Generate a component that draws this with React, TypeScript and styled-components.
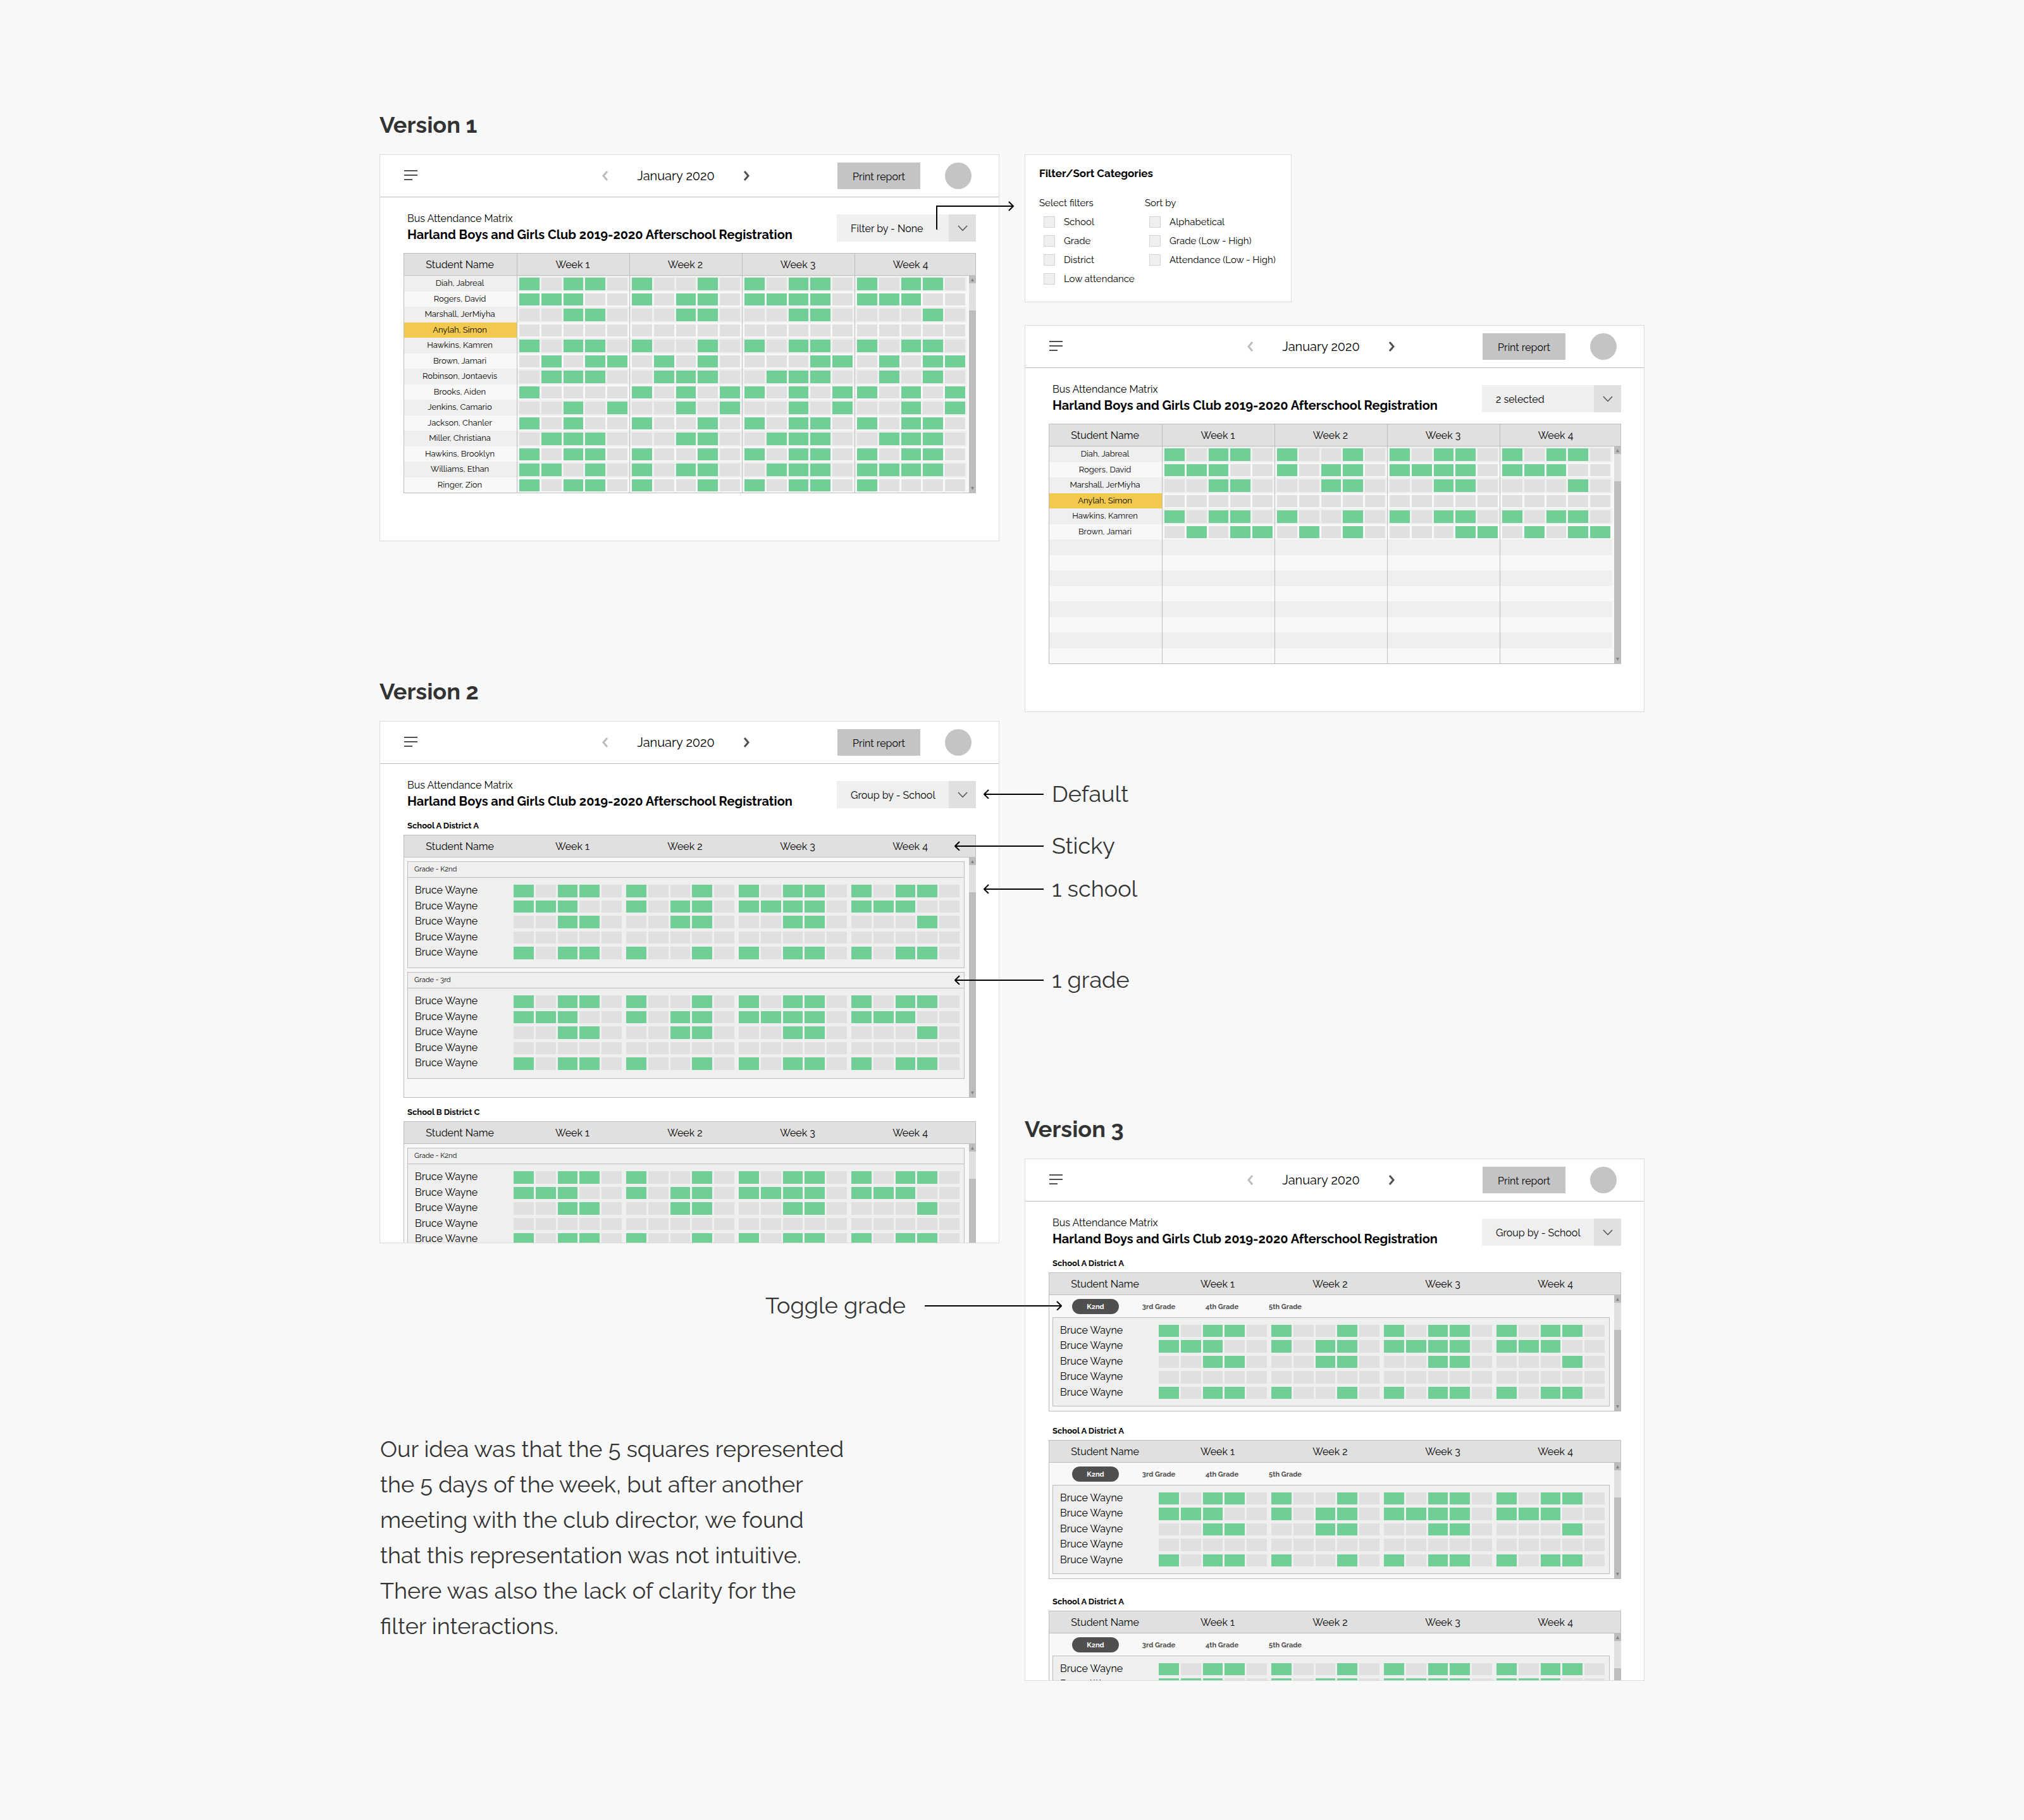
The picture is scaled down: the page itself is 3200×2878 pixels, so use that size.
import React from "react";
import styled, { createGlobalStyle, css } from "styled-components";

const color = {
  page: "#f8f8f8",
  card: "#ffffff",
  cardLine: "#dcdcdc",
  line: "#bdbdbd",
  head: "#e0e0e0",
  stripe: "#efefef",
  button: "#c4c4c4",
  present: "#6fcf97",
  flagged: "#f2c94c",
  dark: "#4f4f4f",
  note: "#333333",
};

const GlobalStyle = createGlobalStyle`
  *, *::before, *::after { box-sizing: border-box; }
  body {
    margin: 0;
    background: ${color.page};
    color: #000;
    font-family: Raleway, "Open Sans", sans-serif;
    font-size: 16px;
  }
  button, select, input { font: inherit; color: inherit; margin: 0; }
  h1, h2, h3, p { margin: 0; }
`;

/* ---------- board ---------- */

const Board = styled.main`
  display: grid;
  grid-template-columns: 1fr 1fr;
  column-gap: 40px;
  align-items: start;
  max-width: 2000px;
  margin: 0 auto;
  padding: 175px 0 220px;
`;

const Column = styled.div<{ $top?: number }>`
  display: flex;
  flex-direction: column;
  align-items: stretch;
  padding-top: ${(p) => p.$top ?? 0}px;
`;

const Version = styled.section<{ $before?: number }>`
  margin-top: ${(p) => p.$before ?? 0}px;
`;

const VersionTitle = styled.h1`
  margin-bottom: 25px;
  font-size: 36px;
  line-height: 44px;
  font-weight: 700;
  color: ${color.note};
`;

const Story = styled.p`
  max-width: 738px;
  margin-top: 297px;
  padding-left: 1px;
  font-size: 36px;
  line-height: 56px;
  color: ${color.note};
`;

/* ---------- screen ---------- */

const Stage = styled.div`
  position: relative;
`;

const Screen = styled.article<{ $height: number }>`
  height: ${(p) => p.$height}px;
  overflow: hidden;
  background: ${color.card};
  border: 1px solid ${color.cardLine};
`;

const TopBar = styled.header`
  display: grid;
  grid-template-columns: 1fr auto 1fr;
  align-items: center;
  height: 67px;
  padding-right: 43px;
  border-bottom: 1px solid ${color.line};
`;

const IconButton = styled.button`
  display: flex;
  justify-self: start;
  padding: 0;
  border: 0;
  background: none;
  cursor: pointer;
`;

const MenuButton = styled(IconButton)`
  margin-left: 38px;
`;

const MonthNav = styled.nav`
  display: flex;
  align-items: center;
  gap: 45px;
  font-size: 20px;
  line-height: 24px;
`;

const Actions = styled.div`
  display: flex;
  justify-content: flex-end;
  align-items: center;
  gap: 39px;
`;

const PrintButton = styled.button`
  width: 131px;
  height: 42px;
  padding: 2px 0 0;
  border: 0;
  background: ${color.button};
  font-size: 16px;
  cursor: pointer;
`;

const Avatar = styled.div`
  width: 42px;
  height: 42px;
  border-radius: 50%;
  background: ${color.button};
`;

const Body = styled.div`
  padding: 22px 36px 0 37px;
`;

const TitleRow = styled.div`
  display: flex;
  justify-content: space-between;
  align-items: flex-start;
  padding-left: 6px;
`;

const Kicker = styled.p`
  font-size: 16px;
  line-height: 24px;
`;

const ReportTitle = styled.h2`
  font-size: 20px;
  line-height: 26px;
  font-weight: 700;
`;

const Picker = styled.label`
  display: grid;
  grid-template-columns: 1fr 43px;
  width: 220px;
  height: 43px;
  margin-top: 5px;
  background: ${color.stripe};
`;

const PickerSelect = styled.select`
  grid-area: 1 / 1 / 2 / 3;
  width: 100%;
  height: 43px;
  padding: 2px 43px 0 22px;
  appearance: none;
  border: 0;
  border-radius: 0;
  background: transparent;
  font-size: 16px;
`;

const PickerArrow = styled.span`
  grid-area: 1 / 2 / 2 / 3;
  display: flex;
  align-items: center;
  justify-content: center;
  background: ${color.head};
  pointer-events: none;
`;

/* ---------- attendance table ---------- */

const Frame = styled.div`
  position: relative;
  border: 1px solid ${color.line};
  background: ${color.page};
`;

const Table = styled.table<{ $bottom?: number }>`
  display: block;
  padding-bottom: ${(p) => p.$bottom ?? 0}px;
`;

const Head = styled.thead`
  display: block;
  height: 35px;
  padding-right: 13px;
  background: ${color.head};
  border-bottom: 1px solid ${color.line};
`;

const HeadRow = styled.tr<{ $ruled?: boolean }>`
  display: grid;
  grid-template-columns: repeat(5, 1fr);
  height: 34px;
  ${(p) =>
    p.$ruled &&
    css`
      th + th {
        border-left: 1px solid ${color.line};
      }
    `}
`;

const HeadCell = styled.th`
  padding: 2px 2px 0 0;
  font-size: 16px;
  line-height: 32px;
  font-weight: 400;
  text-align: center;
`;

const MatrixBody = styled.tbody`
  display: grid;
  grid-auto-rows: 1fr;
  height: 343px;
  padding-right: 13px;
`;

const MatrixRow = styled.tr`
  display: grid;
  grid-template-columns: repeat(5, 1fr);
  background: ${color.page};
  &:nth-child(odd) {
    background: ${color.stripe};
  }
`;

const StudentCell = styled.th<{ $flagged?: boolean }>`
  display: flex;
  align-items: center;
  justify-content: center;
  padding: 0 2px 0 0;
  font-size: 13px;
  line-height: 24px;
  font-weight: 400;
  background: ${(p) => (p.$flagged ? color.flagged : "transparent")};
`;

const WeekCell = styled.td<{ $ruled?: boolean }>`
  display: grid;
  grid-template-columns: repeat(5, 1fr);
  gap: 3px;
  padding: ${(p) => (p.$ruled ? "3px 3px 2px" : "3px 7px 2px 0")};
  border-left: ${(p) => (p.$ruled ? `1px solid ${color.line}` : "0")};
`;

const Day = styled.span<{ $present: boolean }>`
  background: ${(p) => (p.$present ? color.present : color.head)};
`;

const Group = styled.tbody<{ $tabs?: boolean }>`
  display: block;
  margin: ${(p) => (p.$tabs ? 0 : 6)}px 17px 0 5px;
  padding: ${(p) => (p.$tabs ? "8px 0 9px" : "0 0 11px")};
  border: 1px solid ${color.line};
  background: ${color.stripe};
`;

const GradeRow = styled.tr`
  display: block;
  margin-bottom: 8px;
  border-bottom: 1px solid ${color.line};
`;

const GradeCell = styled.th`
  display: block;
  padding: 0 10px;
  font-size: 11px;
  line-height: 24px;
  font-weight: 400;
  text-align: left;
`;

const GroupRows = styled.tr`
  display: grid;
  grid-template-columns: 167px repeat(4, 1fr);
  height: 24px;
  &:nth-child(even) {
    height: 25px;
  }
`;

const PersonCell = styled.th`
  padding: 0 0 0 11px;
  font-size: 16px;
  line-height: 24px;
  font-weight: 400;
  text-align: left;
`;

const TabsBody = styled.tbody`
  display: block;
`;

const TabsRow = styled.tr`
  display: block;
`;

const TabsCell = styled.td`
  display: flex;
  gap: 26px;
  padding: 6px 36px 5px;
`;

const Tab = styled.button<{ $active: boolean }>`
  width: 74px;
  height: 24px;
  padding: 0;
  border: 0;
  border-radius: 12px;
  background: ${(p) => (p.$active ? color.dark : "transparent")};
  color: ${(p) => (p.$active ? "#fff" : color.dark)};
  font-size: 11px;
  font-weight: 700;
  cursor: pointer;
`;

const ScrollBar = styled.div`
  position: absolute;
  top: 35px;
  right: -1px;
  bottom: -1px;
  width: 11px;
  display: grid;
  grid-template-rows: 12px 43px 1fr;
  background: ${color.line};
`;

const ScrollTrack = styled.div`
  background: ${color.head};
`;

const ScrollEnd = styled.div<{ $down?: boolean }>`
  display: flex;
  justify-content: center;
  align-items: ${(p) => (p.$down ? "flex-end" : "center")};
  padding-bottom: ${(p) => (p.$down ? 5 : 0)}px;
`;

const School = styled.section<{ $before: number }>`
  margin-top: ${(p) => p.$before}px;
`;

const SchoolTitle = styled.h3`
  margin-bottom: 6px;
  padding-left: 6px;
  font-size: 13px;
  line-height: 16px;
  font-weight: 700;
`;

/* ---------- filter card ---------- */

const FilterCard = styled.form`
  align-self: flex-start;
  width: 422px;
  margin-bottom: 36px;
  padding: 18px 20px 21px 22px;
  background: ${color.card};
  border: 1px solid ${color.cardLine};
`;

const FilterTitle = styled.h2`
  margin-bottom: 26px;
  font-size: 17px;
  line-height: 22px;
  font-weight: 700;
`;

const FilterColumns = styled.div`
  display: grid;
  grid-template-columns: 167px 1fr;
`;

const FilterSet = styled.fieldset`
  min-width: 0;
  margin: 0;
  padding: 0;
  border: 0;
`;

const FilterLegend = styled.legend`
  margin-bottom: 5px;
  padding: 0;
  font-size: 15px;
  line-height: 20px;
`;

const FilterOption = styled.label`
  display: flex;
  align-items: center;
  gap: 14px;
  height: 30px;
  padding-left: 7px;
  font-size: 15px;
  white-space: nowrap;
`;

const CheckBox = styled.input`
  appearance: none;
  flex: none;
  width: 18px;
  height: 18px;
  border: 1px solid #d3d3d3;
  background: ${color.stripe};
`;

/* ---------- annotations ---------- */

const Note = styled.div<{ $y: number; $reach: number; $side: "left" | "right" }>`
  position: absolute;
  top: ${(p) => p.$y}px;
  ${(p) => p.$side}: calc(100% - ${(p) => p.$reach}px);
  display: flex;
  align-items: center;
  gap: ${(p) => (p.$side === "left" ? 13 : 30)}px;
  font-size: 36px;
  line-height: 44px;
  color: ${color.note};
  white-space: nowrap;
`;

const Elbow = styled.svg`
  position: absolute;
  top: 74px;
  left: calc(100% - 100px);
`;

function Arrow({ length, to }: { length: number; to: "left" | "right" }) {
  const tip = to === "left" ? 1 : length - 1;
  const back = to === "left" ? 8 : length - 8;
  return (
    <svg width={length} height={16} viewBox={`0 0 ${length} 16`} fill="none" stroke="#000" strokeWidth={2} aria-hidden>
      <path d={`M${tip} 9H${to === "left" ? length : 0}M${back} 2L${tip} 9L${back} 16`} />
    </svg>
  );
}

/* ---------- data ---------- */

type Student = { name: string; weeks: string[]; flagged?: boolean };

const students: Student[] = [
  { name: "Diah, Jabreal", weeks: ["10110", "10010", "10110", "10110"] },
  { name: "Rogers, David", weeks: ["11100", "10110", "11110", "11100"] },
  { name: "Marshall, JerMiyha", weeks: ["00110", "00110", "00110", "00010"] },
  { name: "Anylah, Simon", weeks: ["00000", "00000", "00000", "00000"], flagged: true },
  { name: "Hawkins, Kamren", weeks: ["10110", "10010", "10110", "10110"] },
  { name: "Brown, Jamari", weeks: ["01011", "01010", "00011", "01011"] },
  { name: "Robinson, Jontaevis", weeks: ["01110", "01110", "01110", "01010"] },
  { name: "Brooks, Aiden", weeks: ["10000", "10101", "10101", "10101"] },
  { name: "Jenkins, Camario", weeks: ["00101", "00101", "00101", "00101"] },
  { name: "Jackson, Chanler", weeks: ["10100", "10010", "10110", "10110"] },
  { name: "Miller, Christiana", weeks: ["01110", "00110", "01110", "01110"] },
  { name: "Hawkins, Brooklyn", weeks: ["10110", "10010", "10110", "10110"] },
  { name: "Williams, Ethan", weeks: ["11010", "10110", "01110", "11110"] },
  { name: "Ringer, Zion", weeks: ["10110", "10010", "10110", "10000"] },
];

const blankWeeks = ["", "", "", ""];
const selected: Student[] = students.map((s, i) => (i < 6 ? s : { name: "", weeks: blankWeeks }));
const classmates: Student[] = students.slice(0, 5).map((s) => ({ name: "Bruce Wayne", weeks: s.weeks }));
const columns = ["Student Name", "Week 1", "Week 2", "Week 3", "Week 4"];
const grades = ["K2nd", "3rd Grade", "4th Grade", "5th Grade"];

/* ---------- parts ---------- */

function TableHead({ ruled }: { ruled?: boolean }) {
  return (
    <Head>
      <HeadRow $ruled={ruled}>
        {columns.map((c) => (
          <HeadCell key={c} scope="col">
            {c}
          </HeadCell>
        ))}
      </HeadRow>
    </Head>
  );
}

function Weeks({ weeks, ruled }: { weeks: string[]; ruled?: boolean }) {
  return (
    <>
      {weeks.map((week, i) => (
        <WeekCell key={i} $ruled={ruled}>
          {week.split("").map((d, j) => (
            <Day key={j} $present={d === "1"} />
          ))}
        </WeekCell>
      ))}
    </>
  );
}

function Scroller() {
  return (
    <ScrollBar aria-hidden>
      <ScrollEnd>
        <svg width={5} height={5} viewBox="0 0 5 5">
          <path d="M2.5 0L5 5H0Z" fill="#828282" />
        </svg>
      </ScrollEnd>
      <ScrollTrack />
      <ScrollEnd $down>
        <svg width={5} height={5} viewBox="0 0 5 5">
          <path d="M2.5 5L5 0H0Z" fill="#828282" />
        </svg>
      </ScrollEnd>
    </ScrollBar>
  );
}

const MatrixFrame = styled(Frame)`
  margin-top: 16px;
`;

function Matrix({ rows }: { rows: Student[] }) {
  return (
    <MatrixFrame>
      <Table>
        <TableHead ruled />
        <MatrixBody>
          {rows.map((s, i) => (
            <MatrixRow key={i}>
              <StudentCell scope="row" $flagged={s.flagged}>
                {s.name}
              </StudentCell>
              <Weeks weeks={s.weeks} ruled />
            </MatrixRow>
          ))}
        </MatrixBody>
      </Table>
      <Scroller />
    </MatrixFrame>
  );
}

function Classmates({ count = 5 }: { count?: number }) {
  return (
    <>
      {classmates.slice(0, count).map((s, i) => (
        <GroupRows key={i}>
          <PersonCell scope="row">{s.name}</PersonCell>
          <Weeks weeks={s.weeks} />
        </GroupRows>
      ))}
    </>
  );
}

function GradeList({ title, before, groups }: { title: string; before: number; groups: string[] }) {
  return (
    <School $before={before}>
      <SchoolTitle>{title}</SchoolTitle>
      <Frame>
        <Table $bottom={29}>
          <TableHead />
          {groups.map((g) => (
            <Group key={g}>
              <GradeRow>
                <GradeCell scope="rowgroup">{g}</GradeCell>
              </GradeRow>
              <Classmates />
            </Group>
          ))}
        </Table>
        <Scroller />
      </Frame>
    </School>
  );
}

function GradeTabs({ title, before, count }: { title: string; before: number; count?: number }) {
  return (
    <School $before={before}>
      <SchoolTitle>{title}</SchoolTitle>
      <Frame>
        <Table $bottom={7}>
          <TableHead />
          <TabsBody>
            <TabsRow>
              <TabsCell>
                {grades.map((g, i) => (
                  <Tab key={g} type="button" aria-pressed={i === 0} $active={i === 0}>
                    {g}
                  </Tab>
                ))}
              </TabsCell>
            </TabsRow>
          </TabsBody>
          <Group $tabs>
            <Classmates count={count} />
          </Group>
        </Table>
        <Scroller />
      </Frame>
    </School>
  );
}

function Report({ height, picker, children }: { height: number; picker: string; children: React.ReactNode }) {
  return (
    <Screen $height={height}>
      <TopBar>
        <MenuButton type="button" aria-label="Menu">
          <svg width={22} height={18} viewBox="0 0 22 18" stroke={color.dark} strokeWidth={2}>
            <path d="M0 1H21M0 8H21M0 15H13" />
          </svg>
        </MenuButton>
        <MonthNav>
          <IconButton type="button" aria-label="Previous month">
            <svg width={10} height={16} viewBox="0 0 10 16" fill="none" stroke={color.line} strokeWidth={3}>
              <path d="M8 1L2 8L8 15" />
            </svg>
          </IconButton>
          <span>January 2020</span>
          <IconButton type="button" aria-label="Next month">
            <svg width={10} height={16} viewBox="0 0 10 16" fill="none" stroke={color.dark} strokeWidth={3}>
              <path d="M2 1L8 8L2 15" />
            </svg>
          </IconButton>
        </MonthNav>
        <Actions>
          <PrintButton type="button">Print report</PrintButton>
          <Avatar />
        </Actions>
      </TopBar>
      <Body>
        <TitleRow>
          <div>
            <Kicker>Bus Attendance Matrix</Kicker>
            <ReportTitle>Harland Boys and Girls Club 2019-2020 Afterschool Registration</ReportTitle>
          </div>
          <Picker>
            <PickerSelect aria-label="Filter or group" defaultValue={picker}>
              <option>{picker}</option>
            </PickerSelect>
            <PickerArrow>
              <svg width={16} height={10} viewBox="0 0 16 10" fill="none" stroke={color.dark} strokeWidth={1.5}>
                <path d="M1 1L8 8.5L15 1" />
              </svg>
            </PickerArrow>
          </Picker>
        </TitleRow>
        {children}
      </Body>
    </Screen>
  );
}

function Options({ legend, names }: { legend: string; names: string[] }) {
  return (
    <FilterSet>
      <FilterLegend>{legend}</FilterLegend>
      {names.map((n) => (
        <FilterOption key={n}>
          <CheckBox type="checkbox" />
          {n}
        </FilterOption>
      ))}
    </FilterSet>
  );
}

export default function App() {
  return (
    <>
      <GlobalStyle />
      <Board>
        <Column>
          <Version>
            <VersionTitle>Version 1</VersionTitle>
            <Stage>
              <Report height={612} picker="Filter by - None">
                <Matrix rows={students} />
              </Report>
              <Elbow width={126} height={48} viewBox="0 0 126 48" fill="none" stroke="#000" strokeWidth={2} aria-hidden>
                <path d="M1 45V8H122M115 1L122 8L115 15" />
              </Elbow>
            </Stage>
          </Version>
          <Version $before={215}>
            <VersionTitle>Version 2</VersionTitle>
            <Stage>
              <Report height={826} picker="Group by - School">
                <GradeList title="School A District A" before={18} groups={["Grade - K2nd", "Grade - 3rd"]} />
                <GradeList title="School B District C" before={15} groups={["Grade - K2nd"]} />
              </Report>
              <Note $side="left" $reach={25} $y={93}>
                <Arrow to="left" length={95} />
                Default
              </Note>
              <Note $side="left" $reach={71} $y={175}>
                <Arrow to="left" length={141} />
                Sticky
              </Note>
              <Note $side="left" $reach={25} $y={243}>
                <Arrow to="left" length={95} />1 school
              </Note>
              <Note $side="left" $reach={71} $y={387}>
                <Arrow to="left" length={141} />1 grade
              </Note>
            </Stage>
          </Version>
          <Story>
            Our idea was that the 5 squares represented the 5 days of the week, but after another meeting with the club
            director, we found that this representation was not intuitive. There was also the lack of clarity for the
            filter interactions.
          </Story>
        </Column>
        <Column $top={69}>
          <FilterCard>
            <FilterTitle>Filter/Sort Categories</FilterTitle>
            <FilterColumns>
              <Options legend="Select filters" names={["School", "Grade", "District", "Low attendance"]} />
              <Options legend="Sort by" names={["Alphabetical", "Grade (Low - High)", "Attendance (Low - High)"]} />
            </FilterColumns>
          </FilterCard>
          <Report height={612} picker="2 selected">
            <Matrix rows={selected} />
          </Report>
          <Version $before={637}>
            <VersionTitle>Version 3</VersionTitle>
            <Stage>
              <Report height={826} picker="Group by - School">
                <GradeTabs title="School A District A" before={18} />
                <GradeTabs title="School A District A" before={23} />
                <GradeTabs title="School A District A" before={28} count={2} />
              </Report>
              <Note $side="right" $reach={59} $y={210}>
                Toggle grade
                <Arrow to="right" length={217} />
              </Note>
            </Stage>
          </Version>
        </Column>
      </Board>
    </>
  );
}
